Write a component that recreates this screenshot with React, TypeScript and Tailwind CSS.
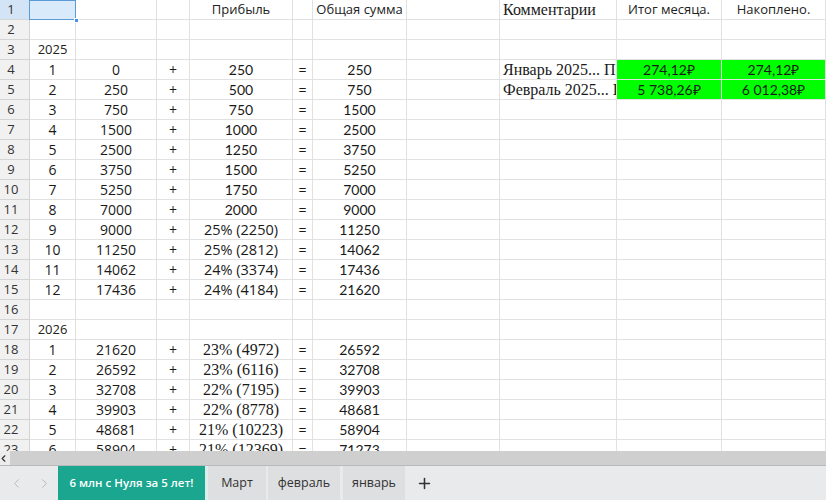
import { Plus, ChevronLeft, ChevronRight } from 'lucide-react';

const W = ['w-[46px]', 'w-[81px]', 'w-[33px]', 'w-[103px]', 'w-[20px]', 'w-[94px]', 'w-[93px]', 'w-[117px]', 'w-[105px]', 'w-[104px]'];

const seg = "font-['Open_Sans',sans-serif] text-[14px] text-[#1a1a1a]";
const cal = "font-['Lato',sans-serif] text-[14px] text-[#1a1a1a]";
const ser = "font-['Liberation_Serif',serif] text-[16px] text-[#1a1a1a]";
const hdr = "font-['Open_Sans',sans-serif] text-[13px] text-[#222]";
const pct = "font-['Open_Sans',sans-serif] text-[14.5px] text-[#1a1a1a]";

type Row = [string, string, string, string, string, string, string?];

// month, start, +, profit, =, total, profit font
const data: Record<number, Row> = {
  4: ['1', '0', '+', '250', '=', '250'],
  5: ['2', '250', '+', '500', '=', '750'],
  6: ['3', '750', '+', '750', '=', '1500'],
  7: ['4', '1500', '+', '1000', '=', '2500'],
  8: ['5', '2500', '+', '1250', '=', '3750'],
  9: ['6', '3750', '+', '1500', '=', '5250'],
  10: ['7', '5250', '+', '1750', '=', '7000'],
  11: ['8', '7000', '+', '2000', '=', '9000'],
  12: ['9', '9000', '+', '25% (2250)', '=', '11250', 'seg'],
  13: ['10', '11250', '+', '25% (2812)', '=', '14062', 'seg'],
  14: ['11', '14062', '+', '24% (3374)', '=', '17436', 'seg'],
  15: ['12', '17436', '+', '24% (4184)', '=', '21620', 'seg'],
  18: ['1', '21620', '+', '23% (4972)', '=', '26592', 'ser'],
  19: ['2', '26592', '+', '23% (6116)', '=', '32708', 'ser'],
  20: ['3', '32708', '+', '22% (7195)', '=', '39903', 'ser'],
  21: ['4', '39903', '+', '22% (8778)', '=', '48681', 'ser'],
  22: ['5', '48681', '+', '21% (10223)', '=', '58904', 'ser'],
  23: ['6', '58904', '+', '21% (12369)', '=', '71273', 'ser'],
};

const comments: Record<number, [string, string, string]> = {
  4: ['Январь 2025... Пополнение', '274,12₽', '274,12₽'],
  5: ['Февраль 2025... Пополнение', '5 738,26₽', '6 012,38₽'],
};

type Cell = { t: string; c: string; left?: boolean; green?: boolean };

function cellsFor(n: number): Cell[] {
  const out: Cell[] = Array.from({ length: 10 }, () => ({ t: '', c: seg }));
  if (n === 1) {
    out[3] = { t: 'Прибыль', c: hdr };
    out[5] = { t: 'Общая сумма', c: hdr };
    out[7] = { t: 'Комментарии', c: ser, left: true };
    out[8] = { t: 'Итог месяца.', c: hdr };
    out[9] = { t: 'Накоплено.', c: hdr };
  }
  if (n === 3) out[0] = { t: '2025', c: hdr };
  if (n === 17) out[0] = { t: '2026', c: hdr };
  const d = data[n];
  if (d) {
    const pf = d[6] === 'seg' ? pct : d[6] === 'ser' ? ser : cal;
    out[0] = { t: d[0], c: seg };
    out[1] = { t: d[1], c: seg };
    out[2] = { t: d[2], c: seg };
    out[3] = { t: d[3], c: pf };
    out[4] = { t: d[4], c: seg };
    out[5] = { t: d[5], c: cal };
  }
  const cm = comments[n];
  if (cm) {
    out[7] = { t: cm[0], c: ser, left: true };
    out[8] = { t: cm[1], c: cal, green: true };
    out[9] = { t: cm[2], c: cal, green: true };
  }
  return out;
}

export default function App() {
  const rows = Array.from({ length: 23 }, (_, i) => i + 1);

  return (
    <div className="w-[826px] h-[500px] bg-white flex flex-col overflow-hidden">
      <div className="h-[451px] overflow-hidden">
        {rows.map((n) => (
          <div key={n} className="flex h-5">
            <div
              className={`w-[30px] shrink-0 h-full border-r border-b border-[#d4d4d4] flex items-center justify-center pr-[7px] font-['Open_Sans',sans-serif] text-[13px] text-[#333] ${
                n === 1 ? 'bg-[#d3e4f6]' : 'bg-[#f1f1f1]'
              }`}
            >
              {n}
            </div>
            {cellsFor(n).map((cell, i) =>
              n === 1 && i === 0 ? (
                <div key={i} className={`${W[i]} shrink-0 h-full relative z-10 bg-[#d9eafb]`}>
                  <span className="absolute -left-px top-0 right-0 bottom-0 border border-[#5b9bd8]" />
                  <span className="absolute -right-[3px] -bottom-[3px] w-[5px] h-[5px] bg-[#4a90e2] border border-white" />
                </div>
              ) : (
                <div
                  key={i}
                  className={`${W[i]} shrink-0 h-full border-r border-b border-[#e1e1e1] flex items-center overflow-hidden whitespace-nowrap ${cell.c} ${
                    cell.left ? 'justify-start pl-[3px]' : 'justify-center'
                  } ${cell.green ? 'bg-[#00ff00]' : ''}`}
                >
                  {cell.t}
                </div>
              )
            )}
          </div>
        ))}
      </div>

      {/* horizontal scrollbar */}
      <div className="h-[15px] flex bg-[#cfcfcf] border-b border-[#b9b9b9]">
        <div className="w-[10px] h-full bg-[#ececec] flex items-center">
          <ChevronLeft size={11} strokeWidth={2.5} className="text-[#333] -ml-[2px]" />
        </div>
      </div>

      {/* sheet tabs */}
      <div className="flex-1 flex items-stretch bg-[#e9eaeb] font-['Open_Sans',sans-serif] text-[12.5px] text-[#333]">
        <div className="w-[58px] flex items-center justify-around pl-[2px] text-[#b5b5b5]">
          <ChevronLeft size={15} strokeWidth={1.5} />
          <ChevronRight size={15} strokeWidth={1.5} />
        </div>
        <div className="w-[147px] bg-[#1aa68f] text-white text-[11.5px] font-semibold flex items-center justify-center">
          6 млн с Нуля за 5 лет!
        </div>
        <div className="w-[2px] bg-[#d4eee9]" />
        <div className="w-[58px] ml-[1px] bg-[#dedfe1] flex items-center justify-center">Март</div>
        <div className="w-[72px] ml-[2px] bg-[#dedfe1] flex items-center justify-center">февраль</div>
        <div className="w-[62px] ml-[3px] bg-[#dedfe1] flex items-center justify-center">январь</div>
        <div className="w-[38px] flex items-center justify-center text-[#333]">
          <Plus size={17} strokeWidth={2.2} />
        </div>
      </div>
    </div>
  );
}
